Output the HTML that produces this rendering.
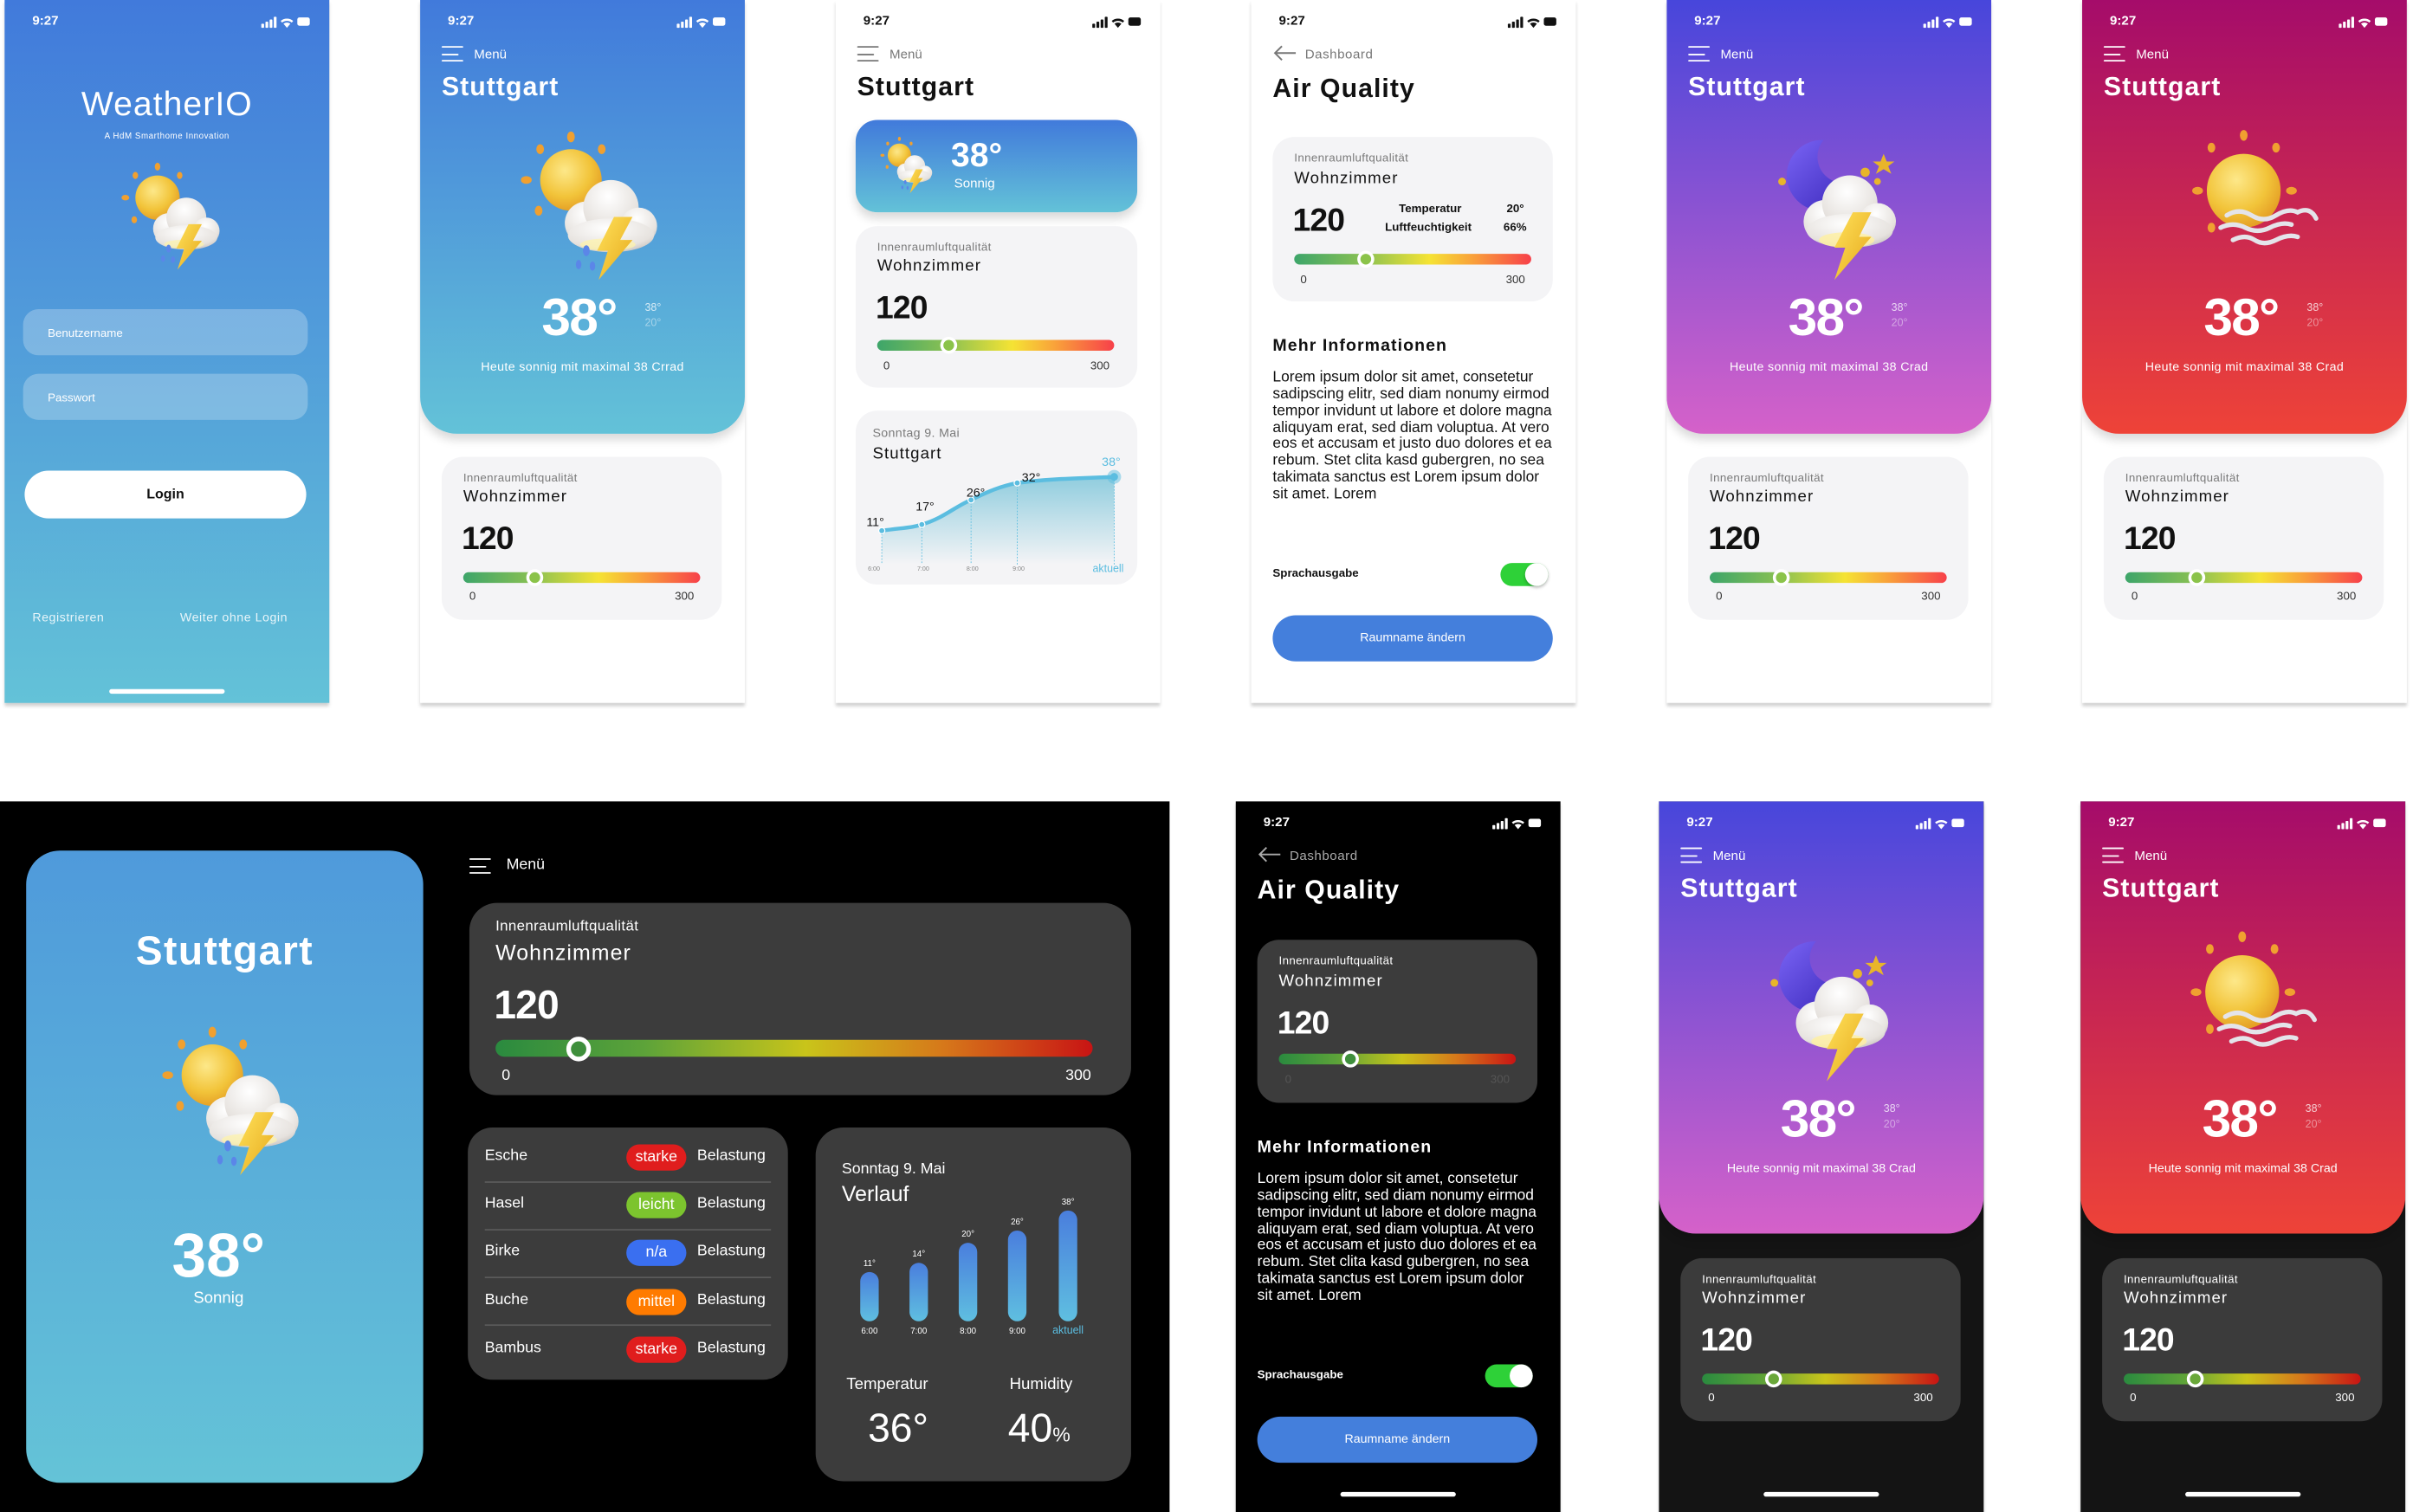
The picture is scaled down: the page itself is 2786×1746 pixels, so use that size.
<!DOCTYPE html>
<html><head><meta charset="utf-8">
<style>
*{margin:0;padding:0;box-sizing:border-box}
html,body{width:2786px;height:1746px;overflow:hidden;background:#fff}
body{font-family:"Liberation Sans",sans-serif}
#w{position:absolute;left:0;top:0;width:1568px;height:983px;transform:scale(1.7768,1.7762);transform-origin:0 0}
.a{position:absolute;white-space:nowrap}
.ph{position:absolute;width:211px;height:457px;overflow:hidden;background:#fff;box-shadow:0 2px 2px rgba(0,0,0,.18)}
.pb{height:462px}
.time{left:18px;top:8px;font-size:8.5px;font-weight:600}
.st{position:absolute;left:165px;top:10px;width:36px;height:9px}
.menu{left:14px;top:30px;width:14px;height:11px}
.menu i{position:absolute;left:0;height:1.3px;border-radius:1px}
.mt{left:35px;top:30px;font-size:8.5px}
.city{left:14px;top:47px;font-size:17px;font-weight:600;letter-spacing:.6px}
.head{position:absolute;left:0;top:0;width:211px;height:282px;border-radius:0 0 24px 24px;box-shadow:0 4px 6px rgba(0,0,0,.15)}
.big{font-size:34px;font-weight:700;color:#fff;letter-spacing:-1px}
.card{position:absolute;border-radius:14px;background:#f4f4f6}
.lab{font-size:7.5px;color:#7a7a7a;letter-spacing:.2px}
.room{font-size:10.5px;font-weight:500;letter-spacing:.6px;color:#111}
.num{font-size:21px;font-weight:700;color:#111;letter-spacing:-.5px}
.bar{position:absolute;height:7px;border-radius:4px;background:linear-gradient(90deg,#3da56a,#8bc152 30%,#f5e334 57%,#f9a23a 75%,#f7404a)}
.dbar{background:linear-gradient(90deg,#2a8a3f,#5da339 25%,#c9c41a 52%,#d6781a 75%,#c81414)}
.knob{position:absolute;width:11px;height:11px;border-radius:50%;background:#8bc34a;border:2px solid #fff;top:-2px}
.sm{font-size:7.5px;color:#333}
.dark .lab,.dark .room,.dark .num,.dark .sm{color:#fff}
.home{position:absolute;left:68px;top:449px;width:75px;height:3px;border-radius:2px}
.pill{position:absolute;left:103px;width:39px;height:17px;border-radius:9px;color:#fff;font-size:10px;text-align:center;line-height:17px}
.lorem{left:14px;top:241px;width:182px;white-space:normal;font-size:9.8px;line-height:10.85px}
</style></head><body>
<svg width="0" height="0" style="position:absolute">
<defs>
<radialGradient id="sunG" cx=".4" cy=".35" r=".7"><stop offset="0" stop-color="#fde889"/><stop offset=".6" stop-color="#f2c43a"/><stop offset="1" stop-color="#e39a22"/></radialGradient>
<radialGradient id="clG" cx=".45" cy=".3" r=".8"><stop offset="0" stop-color="#ffffff"/><stop offset=".7" stop-color="#e6e2de"/><stop offset="1" stop-color="#bdb8b5"/></radialGradient>
<linearGradient id="ltG" x1="0" y1="0" x2="1" y2="1"><stop offset="0" stop-color="#ffe15a"/><stop offset="1" stop-color="#e6a91c"/></linearGradient>
<linearGradient id="moG" x1="0" y1="0" x2="1" y2="1"><stop offset="0" stop-color="#7a64f5"/><stop offset="1" stop-color="#3826b8"/></linearGradient>
<mask id="moM"><rect width="100" height="100" fill="#fff"/><circle cx="52" cy="20" r="17" fill="#000"/></mask>
<symbol id="storm" viewBox="0 0 100 100">
<g fill="#f0a030"><ellipse cx="38" cy="6" rx="2.5" ry="3.5"/><ellipse cx="58" cy="14" rx="2.5" ry="3.2"/><ellipse cx="18" cy="14" rx="2.5" ry="3.2"/><ellipse cx="9" cy="34" rx="3.5" ry="2.5"/><ellipse cx="17" cy="54" rx="2.5" ry="3.2"/></g>
<circle cx="38" cy="34" r="20" fill="url(#sunG)"/>
<g fill="url(#clG)"><circle cx="48" cy="62" r="14"/><circle cx="64" cy="52" r="18"/><circle cx="82" cy="64" r="12"/><ellipse cx="64" cy="70" rx="28" ry="11"/></g>
<ellipse cx="62" cy="76" rx="18" ry="4" fill="#fff3a8" opacity=".7"/>
<polygon points="66,58 78,58 70,73 78,73 56,99 62,80 55,80" fill="url(#ltG)"/>
<g fill="#5b86e8"><ellipse cx="48" cy="80" rx="2.2" ry="3.5"/><ellipse cx="43" cy="89" rx="1.8" ry="3"/><ellipse cx="52" cy="90" rx="1.8" ry="3"/></g>
</symbol>
<symbol id="night" viewBox="0 0 100 100">
<circle cx="38" cy="32" r="23" fill="url(#moG)" mask="url(#moM)"/>
<g fill="#e8b52a"><polygon points="78,18 80,23 85,23 81,26 83,31 78,28 73,31 75,26 71,23 76,23"/><circle cx="66" cy="30" r="3"/><circle cx="74" cy="36" r="2.2"/><circle cx="12" cy="36" r="2.5"/></g>
<g fill="url(#clG)"><circle cx="40" cy="62" r="14"/><circle cx="56" cy="50" r="18"/><circle cx="74" cy="62" r="12"/><ellipse cx="56" cy="68" rx="28" ry="11"/></g>
<ellipse cx="54" cy="74" rx="18" ry="5" fill="#fff0a0" opacity=".8"/>
<polygon points="58,56 70,56 62,72 70,72 46,100 53,79 46,79" fill="url(#ltG)"/>
</symbol>
<symbol id="sunw" viewBox="0 0 100 100">
<g fill="#f0a030"><ellipse cx="45" cy="6" rx="2.5" ry="3.5"/><ellipse cx="66" cy="14" rx="2.5" ry="3.2"/><ellipse cx="24" cy="14" rx="2.5" ry="3.2"/><ellipse cx="15" cy="42" rx="3.5" ry="2.5"/><ellipse cx="76" cy="42" rx="3.5" ry="2.5"/><ellipse cx="24" cy="66" rx="2.5" ry="3.2"/></g>
<circle cx="45" cy="42" r="24" fill="url(#sunG)"/>
<g fill="none" stroke="#e4e4ea" stroke-width="3" stroke-linecap="round"><path d="M34 58 q8 -5 16 0 t16 0 t14 -2 q8 -4 12 4"/><path d="M30 66 q8 -4 16 0 t16 0 t14 -2"/><path d="M38 74 q8 -4 14 0 t14 0 t14 -2"/></g>
</symbol>
<symbol id="stw" viewBox="0 0 36 10"><rect x="0" y="6" width="2" height="3" rx=".5"/><rect x="3" y="4.5" width="2" height="4.5" rx=".5"/><rect x="6" y="3" width="2" height="6" rx=".5"/><rect x="9" y="1" width="2" height="8" rx=".5"/><path d="M14 4 a7 7 0 0 1 9 0 l-1 1.2 a5.5 5.5 0 0 0 -7 0z M16 6 a4 4 0 0 1 5 0 l-2.5 3z"/><rect x="26" y="1.5" width="9" height="6" rx="1.5"/></symbol>
</defs></svg>

<div id="w">

<!-- Phone 1 login -->
<div class="ph" style="left:3px;top:0;background:linear-gradient(180deg,#417adb,#63c2d8)">
<div class="a time" style="color:#fff">9:27</div><svg class="st" fill="#fff"><use href="#stw"/></svg>
<div class="a" style="left:0;width:211px;text-align:center;top:55px;font-size:22px;color:#fff;font-weight:500;letter-spacing:.6px">WeatherIO</div>
<div class="a" style="left:0;width:211px;text-align:center;top:86px;font-size:5.5px;color:#fff;letter-spacing:.3px">A HdM Smarthome Innovation</div>
<svg class="a" style="left:72px;top:100px;width:72px;height:80px" viewBox="0 0 100 100"><use href="#storm"/></svg>
<div class="a" style="left:12px;top:201px;width:185px;height:30px;border-radius:10px;background:rgba(255,255,255,.25);color:#fff;font-size:7.5px;padding:11px 16px">Benutzername</div>
<div class="a" style="left:12px;top:243px;width:185px;height:30px;border-radius:10px;background:rgba(255,255,255,.25);color:#fff;font-size:7.5px;padding:11px 16px">Passwort</div>
<div class="a" style="left:13px;top:306px;width:183px;height:31px;border-radius:16px;background:#fff;text-align:center;font-size:9px;font-weight:600;line-height:31px;color:#111">Login</div>
<div class="a" style="left:18px;top:397px;font-size:8px;color:rgba(255,255,255,.85);letter-spacing:.3px">Registrieren</div>
<div class="a" style="left:114px;top:397px;font-size:8px;color:rgba(255,255,255,.85);letter-spacing:.3px">Weiter ohne Login</div>
<div class="home" style="background:#fff;top:448px"></div>
</div>

<!-- Phone 2 -->
<div class="ph" style="left:273px;top:0">
<div class="head" style="background:linear-gradient(180deg,#417adb,#63c2d8)"></div>
<div class="a time" style="color:#fff">9:27</div><svg class="st" fill="#fff"><use href="#stw"/></svg>
<div class="a menu"><i style="top:0;width:14px;background:#fff"></i><i style="top:4.5px;width:11px;background:#fff"></i><i style="top:9px;width:14px;background:#fff"></i></div>
<div class="a mt" style="color:#fff">Menü</div>
<div class="a city" style="color:#fff">Stuttgart</div>
<svg class="a" style="left:60px;top:83px;width:100px;height:100px" viewBox="0 0 100 100"><use href="#storm"/></svg>
<div class="a big" style="left:79px;top:188px">38°</div>
<div class="a" style="left:146px;top:197px;font-size:7px;color:rgba(255,255,255,.75)">38°</div>
<div class="a" style="left:146px;top:207px;font-size:7px;color:rgba(255,255,255,.45)">20°</div>
<div class="a" style="left:0;width:211px;text-align:center;top:234px;font-size:8px;color:#fff;letter-spacing:.2px">Heute sonnig mit maximal 38 Crrad</div>
<div class="card" style="left:14px;top:297px;width:182px;height:106px">
<div class="a lab" style="left:14px;top:9px">Innenraumluftqualität</div>
<div class="a room" style="left:14px;top:20px">Wohnzimmer</div>
<div class="a num" style="left:13px;top:42px">120</div>
<div class="bar" style="left:14px;top:75px;width:154px"><div class="knob" style="left:41px"></div></div>
<div class="a sm" style="left:18px;top:86px">0</div><div class="a sm" style="right:18px;top:86px">300</div>
</div>
</div>

<!-- Phone 3 -->
<div class="ph" style="left:543px;top:0">
<div class="a time" style="color:#111">9:27</div><svg class="st" fill="#111"><use href="#stw"/></svg>
<div class="a menu"><i style="top:0;width:14px;background:#777"></i><i style="top:4.5px;width:11px;background:#777"></i><i style="top:9px;width:14px;background:#777"></i></div>
<div class="a mt" style="color:#777">Menü</div>
<div class="a city" style="color:#111">Stuttgart</div>
<div class="a" style="left:13px;top:78px;width:183px;height:60px;border-radius:14px;background:linear-gradient(180deg,#417adb,#63c2d8);box-shadow:0 4px 6px rgba(0,0,0,.15)"></div>
<svg class="a" style="left:27px;top:86px;width:38px;height:42px" viewBox="0 0 100 100"><use href="#storm"/></svg>
<div class="a" style="left:75px;top:88px;font-size:22px;font-weight:700;color:#fff">38°</div>
<div class="a" style="left:77px;top:114px;font-size:8.5px;color:#fff">Sonnig</div>
<div class="card" style="left:13px;top:147px;width:183px;height:105px">
<div class="a lab" style="left:14px;top:9px">Innenraumluftqualität</div>
<div class="a room" style="left:14px;top:20px">Wohnzimmer</div>
<div class="a num" style="left:13px;top:42px">120</div>
<div class="bar" style="left:14px;top:74px;width:154px"><div class="knob" style="left:41px"></div></div>
<div class="a sm" style="left:18px;top:86px">0</div><div class="a sm" style="right:18px;top:86px">300</div>
</div>
<div class="card" style="left:13px;top:267px;width:183px;height:113px;overflow:hidden">
<div class="a lab" style="left:11px;top:10px;font-size:8px">Sonntag 9. Mai</div>
<div class="a room" style="left:11px;top:22px">Stuttgart</div>
<svg class="a" style="left:0;top:0;width:183px;height:113px" viewBox="0 0 183 113">
<defs><linearGradient id="arG" x1="0" y1="0" x2="0" y2="1"><stop offset="0" stop-color="#7fc6da"/><stop offset="1" stop-color="#f4f4f6"/></linearGradient></defs>
<path d="M17 78 C32 76 37 76 43 74 C57 70 65 62 75 58 C87 52 95 49 105 47 C127 44 147 44 168 43 L168 100 L17 100Z" fill="url(#arG)" opacity=".85"/>
<path d="M17 78 C32 76 37 76 43 74 C57 70 65 62 75 58 C87 52 95 49 105 47 C127 44 147 44 168 43" fill="none" stroke="#5bbde0" stroke-width="2.5"/>
<g stroke="#5bbde0" stroke-width=".5" stroke-dasharray="1 1"><line x1="17" y1="78" x2="17" y2="100"/><line x1="43" y1="74" x2="43" y2="100"/><line x1="75" y1="58" x2="75" y2="100"/><line x1="105" y1="47" x2="105" y2="100"/><line x1="168" y1="43" x2="168" y2="100"/></g>
<g fill="#5bbde0" stroke="#fff" stroke-width=".7"><circle cx="17" cy="78" r="2"/><circle cx="43" cy="74" r="2"/><circle cx="75" cy="58" r="2"/><circle cx="105" cy="47" r="2"/></g>
<circle cx="168" cy="43" r="4.5" fill="#5bbde0" opacity=".5"/><circle cx="168" cy="43" r="2.5" fill="#5bbde0"/>
<g font-family="Liberation Sans" font-size="8" fill="#111"><text x="7" y="75">11°</text><text x="39" y="65">17°</text><text x="72" y="56">26°</text><text x="108" y="46">32°</text></g>
<text x="160" y="36" font-family="Liberation Sans" font-size="8" fill="#5bbde0">38°</text>
<g font-family="Liberation Sans" font-size="4" fill="#888"><text x="8" y="104">6:00</text><text x="40" y="104">7:00</text><text x="72" y="104">8:00</text><text x="102" y="104">9:00</text></g>
<text x="154" y="105" font-family="Liberation Sans" font-size="7" fill="#5bbde0">aktuell</text>
</svg>
</div>
</div>

<!-- Phone 4 -->
<div class="ph" style="left:813px;top:0">
<div class="a time" style="color:#111">9:27</div><svg class="st" fill="#111"><use href="#stw"/></svg>
<svg class="a" style="left:14px;top:29px;width:16px;height:11px" viewBox="0 0 16 11"><path d="M15 5.5H1.5M6 1L1.5 5.5 6 10" fill="none" stroke="#777" stroke-width="1.1"/></svg>
<div class="a" style="left:35px;top:30px;font-size:8.5px;color:#777;letter-spacing:.3px">Dashboard</div>
<div class="a" style="left:14px;top:48px;font-size:17px;font-weight:600;letter-spacing:.6px;color:#111">Air Quality</div>
<div class="card" style="left:14px;top:89px;width:182px;height:107px">
<div class="a lab" style="left:14px;top:9px">Innenraumluftqualität</div>
<div class="a room" style="left:14px;top:21px">Wohnzimmer</div>
<div class="a num" style="left:13px;top:43px">120</div>
<div class="a" style="left:82px;top:42px;font-size:7.5px;font-weight:600;color:#111">Temperatur</div>
<div class="a" style="left:152px;top:42px;font-size:7.5px;font-weight:600;color:#111">20°</div>
<div class="a" style="left:73px;top:54px;font-size:7.5px;font-weight:600;color:#111">Luftfeuchtigkeit</div>
<div class="a" style="left:150px;top:54px;font-size:7.5px;font-weight:600;color:#111">66%</div>
<div class="bar" style="left:14px;top:76px;width:154px"><div class="knob" style="left:41px"></div></div>
<div class="a sm" style="left:18px;top:88px">0</div><div class="a sm" style="right:18px;top:88px">300</div>
</div>
<div class="a" style="left:14px;top:219px;font-size:11px;font-weight:600;letter-spacing:.6px;color:#111">Mehr Informationen</div>
<div class="a lorem" style="color:#111">Lorem ipsum dolor sit amet, consetetur sadipscing elitr, sed diam nonumy eirmod tempor invidunt ut labore et dolore magna aliquyam erat, sed diam voluptua. At vero eos et accusam et justo duo dolores et ea rebum. Stet clita kasd gubergren, no sea takimata sanctus est Lorem ipsum dolor sit amet. Lorem</div>
<div class="a" style="left:14px;top:368px;font-size:7.5px;font-weight:600;color:#111">Sprachausgabe</div>
<div class="a" style="left:162px;top:366px;width:31px;height:15px;border-radius:8px;background:#2ed138"><div style="position:absolute;right:0;top:0;width:15px;height:15px;border-radius:50%;background:#fff;box-shadow:0 1px 2px rgba(0,0,0,.3)"></div></div>
<div class="a" style="left:14px;top:400px;width:182px;height:30px;border-radius:15px;background:#447fdc;color:#fff;font-size:8px;text-align:center;line-height:30px">Raumname ändern</div>
</div>

<!-- Phone 5 -->
<div class="ph" style="left:1083px;top:0">
<div class="head" style="background:linear-gradient(180deg,#4746db,#d561c9)"></div>
<div class="a time" style="color:#fff">9:27</div><svg class="st" fill="#fff"><use href="#stw"/></svg>
<div class="a menu"><i style="top:0;width:14px;background:#fff"></i><i style="top:4.5px;width:11px;background:#fff"></i><i style="top:9px;width:14px;background:#fff"></i></div>
<div class="a mt" style="color:#fff">Menü</div>
<div class="a city" style="color:#fff">Stuttgart</div>
<svg class="a" style="left:63px;top:82px;width:100px;height:100px" viewBox="0 0 100 100"><use href="#night"/></svg>
<div class="a big" style="left:79px;top:188px">38°</div>
<div class="a" style="left:146px;top:197px;font-size:7px;color:rgba(255,255,255,.75)">38°</div>
<div class="a" style="left:146px;top:207px;font-size:7px;color:rgba(255,255,255,.45)">20°</div>
<div class="a" style="left:0;width:211px;text-align:center;top:234px;font-size:8px;color:#fff;letter-spacing:.2px">Heute sonnig mit maximal 38 Crad</div>
<div class="card" style="left:14px;top:297px;width:182px;height:106px">
<div class="a lab" style="left:14px;top:9px">Innenraumluftqualität</div>
<div class="a room" style="left:14px;top:20px">Wohnzimmer</div>
<div class="a num" style="left:13px;top:42px">120</div>
<div class="bar" style="left:14px;top:75px;width:154px"><div class="knob" style="left:41px"></div></div>
<div class="a sm" style="left:18px;top:86px">0</div><div class="a sm" style="right:18px;top:86px">300</div>
</div>
</div>

<!-- Phone 6 -->
<div class="ph" style="left:1353px;top:0">
<div class="head" style="background:linear-gradient(180deg,#a50c6a,#ee4338)"></div>
<div class="a time" style="color:#fff">9:27</div><svg class="st" fill="#fff"><use href="#stw"/></svg>
<div class="a menu"><i style="top:0;width:14px;background:#fff"></i><i style="top:4.5px;width:11px;background:#fff"></i><i style="top:9px;width:14px;background:#fff"></i></div>
<div class="a mt" style="color:#fff">Menü</div>
<div class="a city" style="color:#fff">Stuttgart</div>
<svg class="a" style="left:60px;top:82px;width:100px;height:100px" viewBox="0 0 100 100"><use href="#sunw"/></svg>
<div class="a big" style="left:79px;top:188px">38°</div>
<div class="a" style="left:146px;top:197px;font-size:7px;color:rgba(255,255,255,.75)">38°</div>
<div class="a" style="left:146px;top:207px;font-size:7px;color:rgba(255,255,255,.45)">20°</div>
<div class="a" style="left:0;width:211px;text-align:center;top:234px;font-size:8px;color:#fff;letter-spacing:.2px">Heute sonnig mit maximal 38 Crad</div>
<div class="card" style="left:14px;top:297px;width:182px;height:106px">
<div class="a lab" style="left:14px;top:9px">Innenraumluftqualität</div>
<div class="a room" style="left:14px;top:20px">Wohnzimmer</div>
<div class="a num" style="left:13px;top:42px">120</div>
<div class="bar" style="left:14px;top:75px;width:154px"><div class="knob" style="left:41px"></div></div>
<div class="a sm" style="left:18px;top:86px">0</div><div class="a sm" style="right:18px;top:86px">300</div>
</div>
</div>

<!-- Black dashboard panel -->
<div class="a dark" style="left:0;top:521px;width:760px;height:462px;background:#000">
<div class="a" style="left:17px;top:32px;width:258px;height:411px;border-radius:22px;background:linear-gradient(180deg,#4f9adb,#64c3d7)">
<div class="a" style="left:0;width:258px;text-align:center;top:50px;font-size:26px;font-weight:600;color:#fff;letter-spacing:.8px">Stuttgart</div>
<svg class="a" style="left:83px;top:110px;width:100px;height:104px" viewBox="0 0 100 100"><use href="#storm"/></svg>
<div class="a" style="left:0;width:250px;text-align:center;top:242px;font-size:40px;font-weight:700;color:#fff">38°</div>
<div class="a" style="left:0;width:250px;text-align:center;top:285px;font-size:10.5px;color:#fff">Sonnig</div>
</div>
<div class="a menu" style="left:305px;top:37px"><i style="top:0;width:14px;background:#fff"></i><i style="top:4.5px;width:11px;background:#fff"></i><i style="top:9px;width:14px;background:#fff"></i></div>
<div class="a" style="left:329px;top:36px;font-size:10px;color:#fff">Menü</div>
<div class="card" style="left:305px;top:66px;width:430px;height:125px;background:#3c3c3c;border-radius:18px">
<div class="a lab" style="left:17px;top:10px;font-size:9.5px">Innenraumluftqualität</div>
<div class="a room" style="left:17px;top:24px;font-size:14px">Wohnzimmer</div>
<div class="a num" style="left:16px;top:51px;font-size:26px">120</div>
<div class="bar dbar" style="left:17px;top:89px;width:388px;height:11px;border-radius:6px"><div class="knob" style="left:46px;width:16px;height:16px;top:-2.5px;border:3px solid #fff;background:#3f8f3c"></div></div>
<div class="a sm" style="left:21px;top:107px;font-size:10px">0</div><div class="a sm" style="right:26px;top:107px;font-size:10px">300</div>
</div>
<div class="card" style="left:304px;top:212px;width:208px;height:164px;background:#3c3c3c;border-radius:16px">
<div class="a" style="left:11px;top:13px;font-size:10px;color:#fff">Esche</div><div class="pill" style="top:11px;background:#e01d1d">starke</div><div class="a" style="left:149px;top:13px;font-size:10px;color:#fff">Belastung</div>
<div class="a" style="left:11px;top:35px;width:186px;height:1px;background:#5a5a5a"></div>
<div class="a" style="left:11px;top:44px;font-size:10px;color:#fff">Hasel</div><div class="pill" style="top:42px;background:#7cc42e">leicht</div><div class="a" style="left:149px;top:44px;font-size:10px;color:#fff">Belastung</div>
<div class="a" style="left:11px;top:66px;width:186px;height:1px;background:#5a5a5a"></div>
<div class="a" style="left:11px;top:75px;font-size:10px;color:#fff">Birke</div><div class="pill" style="top:73px;background:#3a6ff0">n/a</div><div class="a" style="left:149px;top:75px;font-size:10px;color:#fff">Belastung</div>
<div class="a" style="left:11px;top:97px;width:186px;height:1px;background:#5a5a5a"></div>
<div class="a" style="left:11px;top:107px;font-size:10px;color:#fff">Buche</div><div class="pill" style="top:105px;background:#ff7b00">mittel</div><div class="a" style="left:149px;top:107px;font-size:10px;color:#fff">Belastung</div>
<div class="a" style="left:11px;top:128px;width:186px;height:1px;background:#5a5a5a"></div>
<div class="a" style="left:11px;top:138px;font-size:10px;color:#fff">Bambus</div><div class="pill" style="top:136px;background:#e01d1d">starke</div><div class="a" style="left:149px;top:138px;font-size:10px;color:#fff">Belastung</div>
</div>
<div class="card" style="left:530px;top:212px;width:205px;height:230px;background:#3c3c3c;border-radius:18px">
<div class="a" style="left:17px;top:22px;font-size:10px;color:#fff">Sonntag 9. Mai</div>
<div class="a" style="left:17px;top:35px;font-size:14px;color:#fff;font-weight:500">Verlauf</div>
<svg class="a" style="left:0;top:0;width:205px;height:230px" viewBox="0 0 205 230">
<defs><linearGradient id="bG" x1="0" y1="0" x2="0" y2="1"><stop offset="0" stop-color="#4a7edd"/><stop offset="1" stop-color="#5fbfe0"/></linearGradient></defs>
<g fill="url(#bG)"><rect x="29" y="94" width="12" height="32" rx="6"/><rect x="61" y="88" width="12" height="38" rx="6"/><rect x="93" y="75" width="12" height="51" rx="6"/><rect x="125" y="67" width="12" height="59" rx="6"/><rect x="158" y="54" width="12" height="72" rx="6"/></g>
<g font-family="Liberation Sans" font-size="5.5" fill="#fff" text-anchor="middle"><text x="35" y="90">11°</text><text x="67" y="84">14°</text><text x="99" y="71">20°</text><text x="131" y="63">26°</text><text x="164" y="50">38°</text>
<text x="35" y="134">6:00</text><text x="67" y="134">7:00</text><text x="99" y="134">8:00</text><text x="131" y="134">9:00</text></g>
<text x="164" y="134" font-family="Liberation Sans" font-size="7" fill="#5bbde0" text-anchor="middle">aktuell</text>
</svg>
<div class="a" style="left:20px;top:161px;font-size:10.5px;color:#fff">Temperatur</div>
<div class="a" style="left:126px;top:161px;font-size:10.5px;color:#fff">Humidity</div>
<div class="a" style="left:34px;top:180px;font-size:26px;color:#fff">36°</div>
<div class="a" style="left:125px;top:180px;font-size:26px;color:#fff">40<span style="font-size:13px">%</span></div>
</div>
</div>

<!-- Bottom phone 7 dark air quality -->
<div class="ph pb dark" style="left:803px;top:521px;background:#000">
<div class="a time" style="color:#fff">9:27</div><svg class="st" fill="#fff"><use href="#stw"/></svg>
<svg class="a" style="left:14px;top:29px;width:16px;height:11px" viewBox="0 0 16 11"><path d="M15 5.5H1.5M6 1L1.5 5.5 6 10" fill="none" stroke="#aaa" stroke-width="1.1"/></svg>
<div class="a" style="left:35px;top:30px;font-size:8.5px;color:#aaa;letter-spacing:.3px">Dashboard</div>
<div class="a" style="left:14px;top:48px;font-size:17px;font-weight:600;letter-spacing:.6px;color:#fff">Air Quality</div>
<div class="card" style="left:14px;top:90px;width:182px;height:106px;background:#3c3c3c">
<div class="a lab" style="left:14px;top:9px">Innenraumluftqualität</div>
<div class="a room" style="left:14px;top:21px">Wohnzimmer</div>
<div class="a num" style="left:13px;top:43px">120</div>
<div class="bar dbar" style="left:14px;top:74px;width:154px"><div class="knob" style="left:41px;background:#3f8f3c"></div></div>
<div class="a sm" style="left:18px;top:86px;color:#555">0</div><div class="a sm" style="right:18px;top:86px;color:#555">300</div>
</div>
<div class="a" style="left:14px;top:219px;font-size:11px;font-weight:600;letter-spacing:.6px;color:#fff">Mehr Informationen</div>
<div class="a lorem" style="color:#fff">Lorem ipsum dolor sit amet, consetetur sadipscing elitr, sed diam nonumy eirmod tempor invidunt ut labore et dolore magna aliquyam erat, sed diam voluptua. At vero eos et accusam et justo duo dolores et ea rebum. Stet clita kasd gubergren, no sea takimata sanctus est Lorem ipsum dolor sit amet. Lorem</div>
<div class="a" style="left:14px;top:368px;font-size:7.5px;font-weight:600;color:#fff">Sprachausgabe</div>
<div class="a" style="left:162px;top:366px;width:31px;height:15px;border-radius:8px;background:#2ed138"><div style="position:absolute;right:0;top:0;width:15px;height:15px;border-radius:50%;background:#fff"></div></div>
<div class="a" style="left:14px;top:400px;width:182px;height:30px;border-radius:15px;background:#447fdc;color:#fff;font-size:8px;text-align:center;line-height:30px">Raumname ändern</div>
<div class="home" style="background:#fff"></div>
</div>

<!-- Bottom phone 8 -->
<div class="ph pb dark" style="left:1078px;top:521px;background:#141414">
<div class="head" style="background:linear-gradient(180deg,#4746db,#d561c9);height:281px"></div>
<div class="a time" style="color:#fff">9:27</div><svg class="st" fill="#fff"><use href="#stw"/></svg>
<div class="a menu"><i style="top:0;width:14px;background:#fff"></i><i style="top:4.5px;width:11px;background:#fff"></i><i style="top:9px;width:14px;background:#fff"></i></div>
<div class="a mt" style="color:#fff">Menü</div>
<div class="a city" style="color:#fff">Stuttgart</div>
<svg class="a" style="left:63px;top:82px;width:100px;height:100px" viewBox="0 0 100 100"><use href="#night"/></svg>
<div class="a big" style="left:79px;top:188px">38°</div>
<div class="a" style="left:146px;top:197px;font-size:7px;color:rgba(255,255,255,.75)">38°</div>
<div class="a" style="left:146px;top:207px;font-size:7px;color:rgba(255,255,255,.45)">20°</div>
<div class="a" style="left:0;width:211px;text-align:center;top:234px;font-size:8px;color:#fff">Heute sonnig mit maximal 38 Crad</div>
<div class="card" style="left:14px;top:297px;width:182px;height:106px;background:#3b3b3b">
<div class="a lab" style="left:14px;top:9px">Innenraumluftqualität</div>
<div class="a room" style="left:14px;top:20px">Wohnzimmer</div>
<div class="a num" style="left:13px;top:42px">120</div>
<div class="bar dbar" style="left:14px;top:75px;width:154px"><div class="knob" style="left:41px;background:#6aa83a"></div></div>
<div class="a sm" style="left:18px;top:86px">0</div><div class="a sm" style="right:18px;top:86px">300</div>
</div>
<div class="home" style="background:#fff"></div>
</div>

<!-- Bottom phone 9 -->
<div class="ph pb dark" style="left:1352px;top:521px;background:#141414">
<div class="head" style="background:linear-gradient(180deg,#a50c6a,#ee4338);height:281px"></div>
<div class="a time" style="color:#fff">9:27</div><svg class="st" fill="#fff"><use href="#stw"/></svg>
<div class="a menu"><i style="top:0;width:14px;background:#fff"></i><i style="top:4.5px;width:11px;background:#fff"></i><i style="top:9px;width:14px;background:#fff"></i></div>
<div class="a mt" style="color:#fff">Menü</div>
<div class="a city" style="color:#fff">Stuttgart</div>
<svg class="a" style="left:60px;top:82px;width:100px;height:100px" viewBox="0 0 100 100"><use href="#sunw"/></svg>
<div class="a big" style="left:79px;top:188px">38°</div>
<div class="a" style="left:146px;top:197px;font-size:7px;color:rgba(255,255,255,.75)">38°</div>
<div class="a" style="left:146px;top:207px;font-size:7px;color:rgba(255,255,255,.45)">20°</div>
<div class="a" style="left:0;width:211px;text-align:center;top:234px;font-size:8px;color:#fff">Heute sonnig mit maximal 38 Crad</div>
<div class="card" style="left:14px;top:297px;width:182px;height:106px;background:#3b3b3b">
<div class="a lab" style="left:14px;top:9px">Innenraumluftqualität</div>
<div class="a room" style="left:14px;top:20px">Wohnzimmer</div>
<div class="a num" style="left:13px;top:42px">120</div>
<div class="bar dbar" style="left:14px;top:75px;width:154px"><div class="knob" style="left:41px;background:#6aa83a"></div></div>
<div class="a sm" style="left:18px;top:86px">0</div><div class="a sm" style="right:18px;top:86px">300</div>
</div>
<div class="home" style="background:#fff"></div>
</div>

</div>
</body></html>
